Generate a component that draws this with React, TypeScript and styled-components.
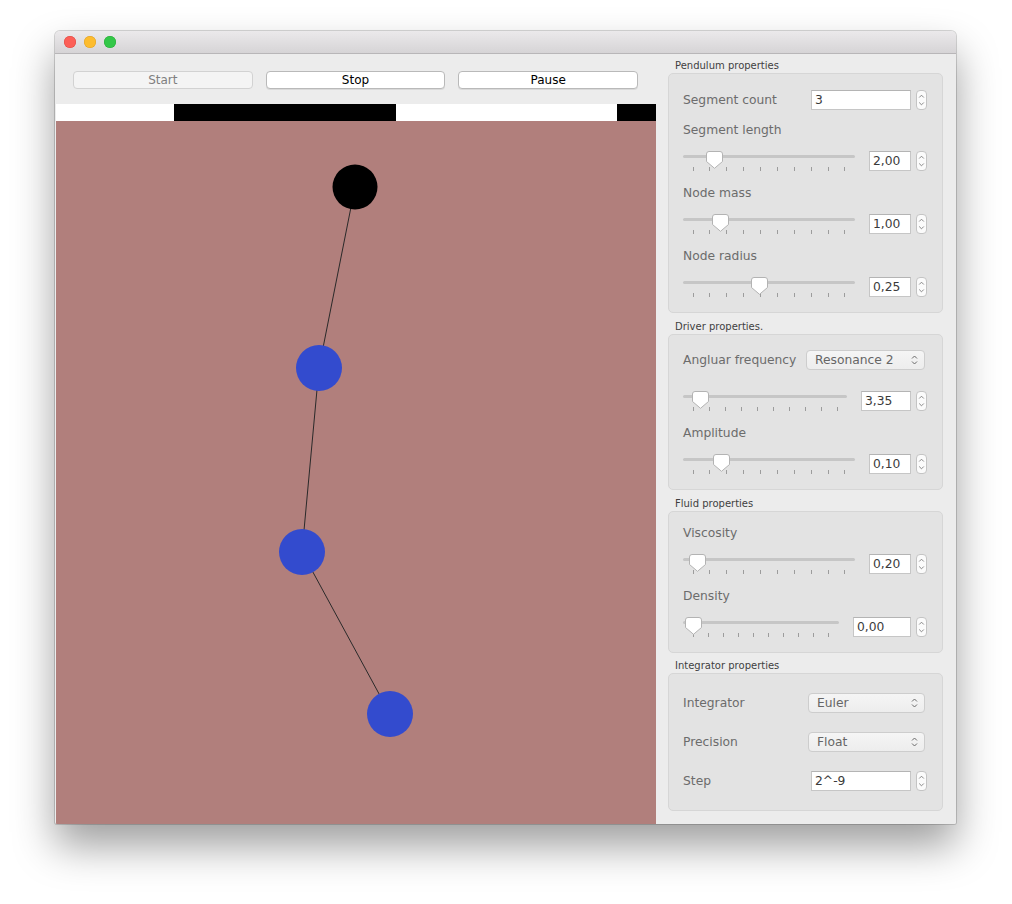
import React from "react";
import styled, { createGlobalStyle } from "styled-components";

const Global = createGlobalStyle`
  html, body { margin: 0; padding: 0; background: #ffffff; }
  body { font-family: "DejaVu Sans", "Liberation Sans", sans-serif; }
  * { box-sizing: border-box; }
`;

const Page = styled.div`
  padding: 31px 0 0 55px;
  height: 904px;
`;

const Window = styled.div`
  width: 901px;
  height: 793px;
  display: flex;
  flex-direction: column;
  border-radius: 5px 5px 2px 2px;
  overflow: hidden;
  background: #ececec;
  box-shadow: 0 0 0 1px rgba(0, 0, 0, 0.16), 0 22px 42px rgba(0, 0, 0, 0.38);
`;

const TitleBar = styled.div`
  height: 23px;
  flex: none;
  display: flex;
  align-items: center;
  gap: 8px;
  padding-left: 9px;
  background: linear-gradient(#ebe9eb, #d6d4d6);
  border-bottom: 1px solid #b8b6b8;
`;

const Light = styled.span<{ $c: string; $b: string }>`
  width: 12px;
  height: 12px;
  border-radius: 50%;
  background: ${(p) => p.$c};
  box-shadow: inset 0 0 0 0.5px ${(p) => p.$b};
`;

const Body = styled.div`
  flex: 1;
  display: flex;
  padding-left: 1px;
  min-height: 0;
`;

const LeftPane = styled.div`
  width: 600px;
  display: flex;
  flex-direction: column;
`;

const Toolbar = styled.div`
  height: 50px;
  display: flex;
  gap: 13px;
  padding: 17px 18px 0 17px;
  background: #ececec;
`;

const Button = styled.button<{ $disabled?: boolean }>`
  flex: 1;
  height: 18px;
  padding: 0;
  border-radius: 4px;
  border: 1px solid ${(p) => (p.$disabled ? "#d2d2d2" : "#b9b9b9")};
  background: ${(p) => (p.$disabled ? "#f4f4f4" : "#ffffff")};
  color: ${(p) => (p.$disabled ? "#7f7f7f" : "#000000")};
  font-family: "DejaVu Sans", sans-serif;
  font-size: 12px;
  line-height: 16px;
  box-shadow: ${(p) => (p.$disabled ? "none" : "0 1px 0 rgba(0,0,0,0.08)")};
`;

const Strip = styled.div`
  height: 17px;
  display: flex;
`;

const StripSeg = styled.div<{ $w: number; $dark: boolean }>`
  width: ${(p) => p.$w}px;
  background: ${(p) => (p.$dark ? "#000000" : "#ffffff")};
`;

const Canvas = styled.div`
  flex: 1;
  background: #b17f7c;
  display: flex;
`;

const RightPane = styled.div`
  width: 300px;
  display: flex;
  flex-direction: column;
  padding: 5px 13px 0 12px;
  background: #ececec;
`;

const GroupTitle = styled.div<{ $mt: number }>`
  font-size: 10px;
  line-height: 13px;
  color: #3f3f3f;
  padding-left: 7px;
  margin-top: ${(p) => p.$mt}px;
  margin-bottom: 1px;
`;

const GroupBox = styled.div<{ $pt: number; $pb: number }>`
  display: flex;
  flex-direction: column;
  background: #e3e3e3;
  border: 1px solid #d6d6d6;
  border-radius: 5px;
  padding: ${(p) => p.$pt - 1}px 15px ${(p) => p.$pb - 1}px 14px;
`;

const Label = styled.div<{ $mt?: number }>`
  font-size: 12.3px;
  line-height: 16px;
  height: 16px;
  color: #6c6c6c;
  margin-top: ${(p) => p.$mt ?? 0}px;
  white-space: nowrap;
`;

const FieldRow = styled.div<{ $mt?: number }>`
  display: flex;
  align-items: center;
  height: 20px;
  margin-top: ${(p) => p.$mt ?? 0}px;
`;

const RowLabel = styled(Label)`
  flex: 1;
`;

const TextField = styled.div<{ $w: number }>`
  width: ${(p) => p.$w}px;
  height: 20px;
  background: #ffffff;
  border: 1px solid #c6c6c6;
  border-top-color: #b4b4b4;
  font-size: 12.3px;
  line-height: 18px;
  color: #3a3a3a;
  padding-left: 3px;
  white-space: nowrap;
`;

const StepperBox = styled.div`
  width: 11px;
  height: 20px;
  margin-left: 5px;
  border: 1px solid #c4c4c4;
  border-radius: 4px;
  background: #fbfbfb;
  display: flex;
  align-items: center;
  justify-content: center;
`;

const Combo = styled.div<{ $w: number; $mr: number }>`
  width: ${(p) => p.$w}px;
  margin-right: ${(p) => p.$mr}px;
  height: 20px;
  display: flex;
  align-items: center;
  justify-content: space-between;
  padding: 0 6px 0 8px;
  border: 1px solid #cdcdcd;
  border-radius: 4px;
  background: linear-gradient(#f5f5f5, #ededed);
  font-size: 12.3px;
  color: #666666;
  white-space: nowrap;
`;

const SliderRow = styled.div<{ $mt: number }>`
  display: flex;
  align-items: flex-start;
  height: 20px;
  margin-top: ${(p) => p.$mt}px;
`;

const SliderArea = styled.div`
  flex: 1;
  position: relative;
  height: 20px;
  margin-right: 14px;
  display: flex;
  flex-direction: column;
`;

const Track = styled.div`
  margin-top: 4px;
  height: 3px;
  border-radius: 2px;
  background: #c6c6c6;
`;

const Ticks = styled.div`
  margin-top: 9px;
  height: 4px;
  display: flex;
  justify-content: space-between;
  padding: 0 9.5px;
`;

const Tick = styled.span`
  width: 1px;
  height: 4px;
  background: #9c9c9c;
`;

const ThumbWrap = styled.div`
  position: absolute;
  top: 0;
  width: 17px;
  height: 18px;
  display: flex;
`;

const Arrows: React.FC = () => (
  <svg width="7" height="12" viewBox="0 0 7 12">
    <path d="M1 4.5 L3.5 2 L6 4.5" fill="none" stroke="#6a6a6a" strokeWidth="1" />
    <path d="M1 7.5 L3.5 10 L6 7.5" fill="none" stroke="#6a6a6a" strokeWidth="1" />
  </svg>
);

const SmallArrows: React.FC = () => (
  <svg width="7" height="16" viewBox="0 0 7 16">
    <path d="M1.2 5.5 L3.5 3.2 L5.8 5.5" fill="none" stroke="#7a7a7a" strokeWidth="0.9" />
    <path d="M1.2 10.5 L3.5 12.8 L5.8 10.5" fill="none" stroke="#7a7a7a" strokeWidth="0.9" />
  </svg>
);

const Stepper: React.FC = () => (
  <StepperBox>
    <SmallArrows />
  </StepperBox>
);

const Slider: React.FC<{ f: number; value: string; w: number; mt: number }> = ({ f, value, w, mt }) => (
  <SliderRow $mt={mt}>
    <SliderArea>
      <Track />
      <Ticks>
        {Array.from({ length: 10 }).map((_, i) => (
          <Tick key={i} />
        ))}
      </Ticks>
      <ThumbWrap style={{ left: `calc(10px + (100% - 20px) * ${f} - 8.5px)` }}>
        <svg width="17" height="18" viewBox="0 0 17 18">
          <path
            d="M3 0.5 H14 Q16.5 0.5 16.5 3 V10.5 L8.5 17.3 L0.5 10.5 V3 Q0.5 0.5 3 0.5 Z"
            fill="#ffffff"
            stroke="#b3b3b3"
            strokeWidth="1"
          />
        </svg>
      </ThumbWrap>
    </SliderArea>
    <TextField $w={w}>{value}</TextField>
    <Stepper />
  </SliderRow>
);

const strip = [
  { w: 118, dark: false },
  { w: 222, dark: true },
  { w: 221, dark: false },
  { w: 39, dark: true },
];

const nodes = [
  { x: 299, y: 66, r: 22.5, c: "#000000" },
  { x: 263, y: 247, r: 23, c: "#334bce" },
  { x: 246, y: 431, r: 23, c: "#334bce" },
  { x: 334, y: 593, r: 23, c: "#334bce" },
];

const Pendulum: React.FC = () => (
  <svg width="600" height="703" viewBox="0 0 600 703">
    {nodes.slice(1).map((n, i) => (
      <line key={"l" + i} x1={nodes[i].x} y1={nodes[i].y} x2={n.x} y2={n.y} stroke="#2a2a2a" strokeWidth="1" />
    ))}
    {nodes.map((n, i) => (
      <circle key={i} cx={n.x} cy={n.y} r={n.r} fill={n.c} />
    ))}
  </svg>
);

export default function App() {
  return (
    <>
      <Global />
      <Page>
        <Window>
          <TitleBar>
            <Light $c="#fc5f57" $b="#de4840" />
            <Light $c="#fdbc2e" $b="#de9f24" />
            <Light $c="#33c748" $b="#27aa35" />
          </TitleBar>
          <Body>
            <LeftPane>
              <Toolbar>
                <Button $disabled>Start</Button>
                <Button>Stop</Button>
                <Button>Pause</Button>
              </Toolbar>
              <Strip>
                {strip.map((s, i) => (
                  <StripSeg key={i} $w={s.w} $dark={s.dark} />
                ))}
              </Strip>
              <Canvas>
                <Pendulum />
              </Canvas>
            </LeftPane>
            <RightPane>
              <GroupTitle $mt={0}>Pendulum properties</GroupTitle>
              <GroupBox $pt={17} $pb={16}>
                <FieldRow>
                  <RowLabel>Segment count</RowLabel>
                  <TextField $w={100}>3</TextField>
                  <Stepper />
                </FieldRow>
                <Label $mt={12}>Segment length</Label>
                <Slider f={0.14} value="2,00" w={42} mt={13} />
                <Label $mt={14}>Node mass</Label>
                <Slider f={0.18} value="1,00" w={42} mt={13} />
                <Label $mt={14}>Node radius</Label>
                <Slider f={0.435} value="0,25" w={42} mt={13} />
              </GroupBox>

              <GroupTitle $mt={7}>Driver properties.</GroupTitle>
              <GroupBox $pt={16} $pb={16}>
                <FieldRow>
                  <RowLabel>Angluar frequency</RowLabel>
                  <Combo $w={119} $mr={2}>
                    <span>Resonance 2</span>
                    <Arrows />
                  </Combo>
                </FieldRow>
                <Slider f={0.055} value="3,35" w={50} mt={21} />
                <Label $mt={14}>Amplitude</Label>
                <Slider f={0.19} value="0,10" w={42} mt={13} />
              </GroupBox>

              <GroupTitle $mt={7}>Fluid properties</GroupTitle>
              <GroupBox $pt={14} $pb={16}>
                <Label>Viscosity</Label>
                <Slider f={0.03} value="0,20" w={42} mt={13} />
                <Label $mt={14}>Density</Label>
                <Slider f={0} value="0,00" w={58} mt={13} />
              </GroupBox>

              <GroupTitle $mt={6}>Integrator properties</GroupTitle>
              <GroupBox $pt={20} $pb={20}>
                <FieldRow>
                  <RowLabel>Integrator</RowLabel>
                  <Combo $w={117} $mr={2}>
                    <span>Euler</span>
                    <Arrows />
                  </Combo>
                </FieldRow>
                <FieldRow $mt={19}>
                  <RowLabel>Precision</RowLabel>
                  <Combo $w={117} $mr={2}>
                    <span>Float</span>
                    <Arrows />
                  </Combo>
                </FieldRow>
                <FieldRow $mt={19}>
                  <RowLabel>Step</RowLabel>
                  <TextField $w={100}>2^-9</TextField>
                  <Stepper />
                </FieldRow>
              </GroupBox>
            </RightPane>
          </Body>
        </Window>
      </Page>
    </>
  );
}
